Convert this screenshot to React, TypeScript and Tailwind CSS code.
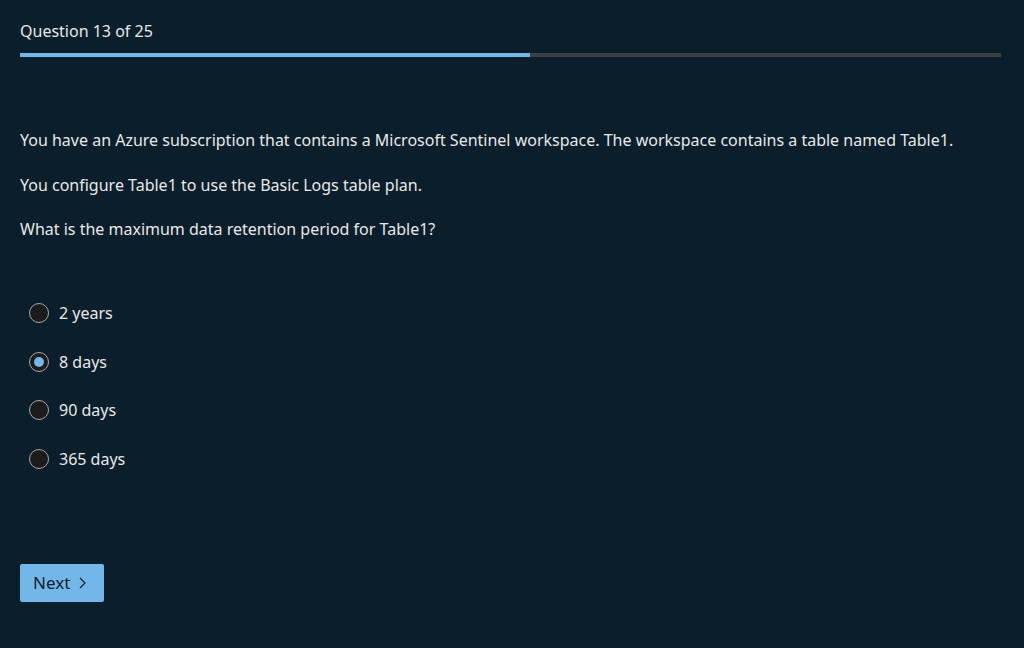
import { useState } from "react";

const options = ["2 years", "8 days", "90 days", "365 days"];

export default function App() {
  const [selected, setSelected] = useState(1);

  return (
    <div
      className="min-h-[648px] w-full bg-[#0b1e2b] px-5 text-[16px] text-[#e8e8e8]"
      style={{ fontFamily: '"Noto Sans", "Open Sans", sans-serif' }}
    >
      <div className="pt-[19px] leading-[24px]">Question 13 of 25</div>
      <div className="mt-[10px] flex h-1 w-[981px] bg-[#3c4043]">
        <div className="h-full w-[510px] bg-[#73b6e8]" />
      </div>

      <div className="mt-[71px] flex flex-col gap-[20.5px] leading-[24px]">
        <p>
          You have an Azure subscription that contains a Microsoft Sentinel
          workspace. The workspace contains a table named Table1.
        </p>
        <p>You configure Table1 to use the Basic Logs table plan.</p>
        <p>What is the maximum data retention period for Table1?</p>
      </div>

      <div className="mt-[60px] flex flex-col gap-[24.5px] pl-[9px]">
        {options.map((opt, i) => (
          <label
            key={opt}
            className="flex cursor-pointer items-center gap-[10px] leading-[24px]"
            onClick={() => setSelected(i)}
          >
            <span className="flex h-[20px] w-[20px] items-center justify-center rounded-full border border-[#a8a8a8] bg-[#1c1c1c]">
              {selected === i && (
                <span className="h-[10px] w-[10px] rounded-full bg-[#73b6e8]" />
              )}
            </span>
            <span>{opt}</span>
          </label>
        ))}
      </div>

      <button className="mt-[93px] flex h-[38px] w-[84px] items-center gap-[8px] rounded-[2px] bg-[#73b6e8] pl-[13px] text-[17px] text-[#0b1e2b]">
        Next
        <svg width="8" height="12" viewBox="0 0 8 12" fill="none">
          <path d="M2 1l5 5-5 5" stroke="#0b1e2b" strokeWidth="1.2" />
        </svg>
      </button>
    </div>
  );
}
